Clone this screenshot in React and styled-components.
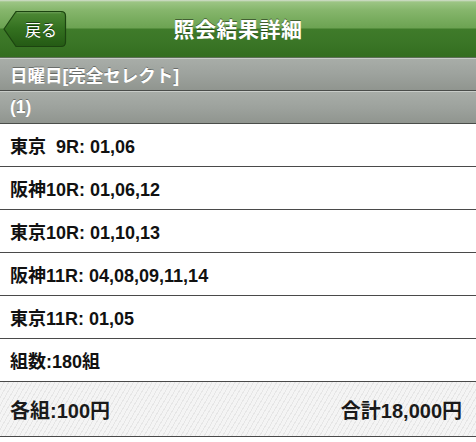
import React from "react";
import styled, { createGlobalStyle } from "styled-components";

const Global = createGlobalStyle`
  html, body { margin: 0; padding: 0; background: #fff; }
  body { font-family: "Liberation Sans", "Noto Sans CJK JP", sans-serif; }
`;

const Page = styled.div`
  width: 476px;
  height: 442px;
  overflow: hidden;
  display: flex;
  flex-direction: column;
  background: #fff;
`;

const NavBar = styled.div`
  height: 57px;
  flex: none;
  position: relative;
  display: flex;
  align-items: center;
  justify-content: center;
  background: linear-gradient(
    to bottom,
    #d6dfd0 0px,
    #9cc584 2px,
    #86b66c 10px,
    #6ca352 28px,
    #3f7b2a 29px,
    #3a7526 44px,
    #336d1f 57px
  );
  border-bottom: 1px solid #5d6e57;
`;

const Title = styled.h1`
  margin: 0 0 2px 0;
  color: #fff;
  font-size: 21px;
  font-weight: bold;
  letter-spacing: 0.5px;
  text-shadow: 0 -1px 0 rgba(0, 0, 0, 0.45);
`;

const BackButton = styled.button`
  position: absolute;
  left: 3px;
  top: 10px;
  width: 64px;
  height: 38px;
  padding: 0 0 0 12px;
  border: none;
  background: transparent;
  color: #fff;
  font-family: inherit;
  font-size: 16px;
  display: flex;
  align-items: center;
  justify-content: center;
  text-shadow: 0 -1px 0 rgba(0, 0, 0, 0.5);
  & > svg { position: absolute; left: 0; top: 0; }
  & > span { position: relative; }
`;

const SectionBar = styled.div`
  height: 31px;
  flex: none;
  display: flex;
  align-items: center;
  padding: 0 10px;
  color: #fff;
  font-size: 17.5px;
  font-weight: bold;
  text-shadow: 0 -1px 0 rgba(0, 0, 0, 0.35);
  background: linear-gradient(to bottom, #a8ada8 0px, #9da29d 50%, #90958f 100%);
  border-top: 1px solid #c8ccc8;
  border-bottom: 1px solid #4a4d4a;
`;

const Row = styled.div`
  height: 42px;
  flex: none;
  display: flex;
  align-items: center;
  padding: 0 10px;
  font-size: 18px;
  font-weight: bold;
  color: #111;
  border-bottom: 1px solid #4a4a4a;
  white-space: pre;
`;

const Footer = styled.div`
  height: 54px;
  flex: none;
  display: flex;
  align-items: center;
  justify-content: space-between;
  padding: 0 14px 0 10px;
  font-size: 20px;
  font-weight: bold;
  color: #1a1a1a;
  border-bottom: 1px solid #4a4a4a;
  background-color: #f2f2f2;
  background-image: repeating-linear-gradient(
    -60deg,
    #f4f4f4 0px,
    #f4f4f4 3px,
    #e6e6e6 3px,
    #e6e6e6 4px
  );
`;

const BackShape = () => (
  <svg width="64" height="38" viewBox="0 0 64 38">
    <defs>
      <linearGradient id="bk" x1="0" y1="0" x2="0" y2="1">
        <stop offset="0" stopColor="#4e8a36" />
        <stop offset="0.5" stopColor="#33701f" />
        <stop offset="1" stopColor="#245a14" />
      </linearGradient>
    </defs>
    <path
      d="M1 19 L13 1.5 H58 Q62.5 1.5 62.5 6 V32 Q62.5 36.5 58 36.5 H13 Z"
      fill="url(#bk)"
      stroke="#1c4410"
      strokeWidth="1.2"
    />
    <path d="M14 2.8 H58" stroke="rgba(255,255,255,0.18)" strokeWidth="1" />
  </svg>
);

const rows = [
  "東京  9R: 01,06",
  "阪神10R: 01,06,12",
  "東京10R: 01,10,13",
  "阪神11R: 04,08,09,11,14",
  "東京11R: 01,05",
  "組数:180組",
];

export default function App() {
  return (
    <>
      <Global />
      <Page>
        <NavBar>
          <BackButton>
            <BackShape />
            <span>戻る</span>
          </BackButton>
          <Title>照会結果詳細</Title>
        </NavBar>
        <SectionBar>日曜日[完全セレクト]</SectionBar>
        <SectionBar>(1)</SectionBar>
        {rows.map((r) => (
          <Row key={r}>{r}</Row>
        ))}
        <Footer>
          <span>各組:100円</span>
          <span>合計18,000円</span>
        </Footer>
      </Page>
    </>
  );
}
